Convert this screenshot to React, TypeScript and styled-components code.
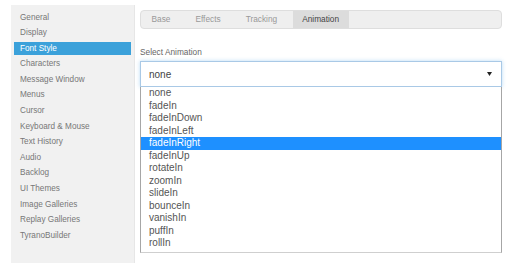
import React from "react";
import styled, { createGlobalStyle } from "styled-components";

const Global = createGlobalStyle`
  html, body { margin: 0; padding: 0; background: #fff; }
  body { font-family: "Liberation Sans", Arial, sans-serif; }
`;

const Page = styled.div`
  display: flex;
  align-items: stretch;
  height: 263px;
  overflow: hidden;
`;

const Sidebar = styled.nav`
  margin: 5px 0 0 11px;
  width: 124px;
  box-sizing: border-box;
  background: #f1f1f1;
  border-right: 1px solid #e6e6e6;
  padding: 5.5px 3px 0 3px;
  display: flex;
  flex-direction: column;
  gap: 2.6px;
`;

const NavItem = styled.div<{ $active?: boolean }>`
  height: 13px;
  line-height: 13px;
  padding-left: 6px;
  font-size: 8.2px;
  color: ${(p) => (p.$active ? "#fff" : "#777")};
  background: ${(p) => (p.$active ? "#3ba1da" : "transparent")};
  white-space: nowrap;
`;

const Main = styled.main`
  margin-left: 5px;
  width: 362px;
  padding-top: 10px;
  display: flex;
  flex-direction: column;
`;

const Tabs = styled.div`
  height: 19px;
  box-sizing: border-box;
  border: 1px solid #dedede;
  border-radius: 4px;
  background: #efefef;
  display: flex;
  gap: 6px;
  padding-left: 1px;
  overflow: hidden;
`;

const Tab = styled.div<{ $active?: boolean }>`
  padding: 0 9.5px;
  line-height: 17px;
  font-size: 8.3px;
  color: ${(p) => (p.$active ? "#444" : "#999")};
  background: ${(p) => (p.$active ? "#dcdcdc" : "transparent")};
`;

const Label = styled.div`
  margin-top: 18px;
  font-size: 8.3px;
  color: #666;
  line-height: 10px;
`;

const Select = styled.div`
  margin-top: 4px;
  height: 26px;
  box-sizing: border-box;
  border: 1px solid #a9c9e6;
  box-shadow: 0 0 4px rgba(102, 175, 233, 0.45);
  display: flex;
  align-items: center;
  justify-content: space-between;
  padding: 0 8px 0 8px;
  font-size: 10px;
  color: #444;
  background: #fff;
`;

const Arrow = styled.svg`
  width: 5px;
  height: 4px;
  margin-right: 1px;
`;

const List = styled.div`
  box-sizing: border-box;
  border: 1px solid #a6a6a6;
  border-top: none;
  border-bottom-color: #cfcfcf;
  padding-bottom: 2px;
  background: #fff;
`;

const Option = styled.div<{ $active?: boolean }>`
  height: 12.5px;
  line-height: 12.5px;
  padding-left: 8px;
  font-size: 10px;
  color: ${(p) => (p.$active ? "#fff" : "#555")};
  background: ${(p) => (p.$active ? "#1e90ff" : "transparent")};
`;

const navItems = [
  "General",
  "Display",
  "Font Style",
  "Characters",
  "Message Window",
  "Menus",
  "Cursor",
  "Keyboard & Mouse",
  "Text History",
  "Audio",
  "Backlog",
  "UI Themes",
  "Image Galleries",
  "Replay Galleries",
  "TyranoBuilder",
];

const tabs = ["Base", "Effects", "Tracking", "Animation"];

const options = [
  "none",
  "fadeIn",
  "fadeInDown",
  "fadeInLeft",
  "fadeInRight",
  "fadeInUp",
  "rotateIn",
  "zoomIn",
  "slideIn",
  "bounceIn",
  "vanishIn",
  "puffIn",
  "rollIn",
];

export default function App() {
  return (
    <>
      <Global />
      <Page>
        <Sidebar>
          {navItems.map((n) => (
            <NavItem key={n} $active={n === "Font Style"}>
              {n}
            </NavItem>
          ))}
        </Sidebar>
        <Main>
          <Tabs>
            {tabs.map((t) => (
              <Tab key={t} $active={t === "Animation"}>
                {t}
              </Tab>
            ))}
          </Tabs>
          <Label>Select Animation</Label>
          <Select>
            <span>none</span>
            <Arrow viewBox="0 0 5 4">
              <path d="M0 0 H5 L2.5 4 Z" fill="#222" />
            </Arrow>
          </Select>
          <List>
            {options.map((o) => (
              <Option key={o} $active={o === "fadeInRight"}>
                {o}
              </Option>
            ))}
          </List>
        </Main>
      </Page>
    </>
  );
}
